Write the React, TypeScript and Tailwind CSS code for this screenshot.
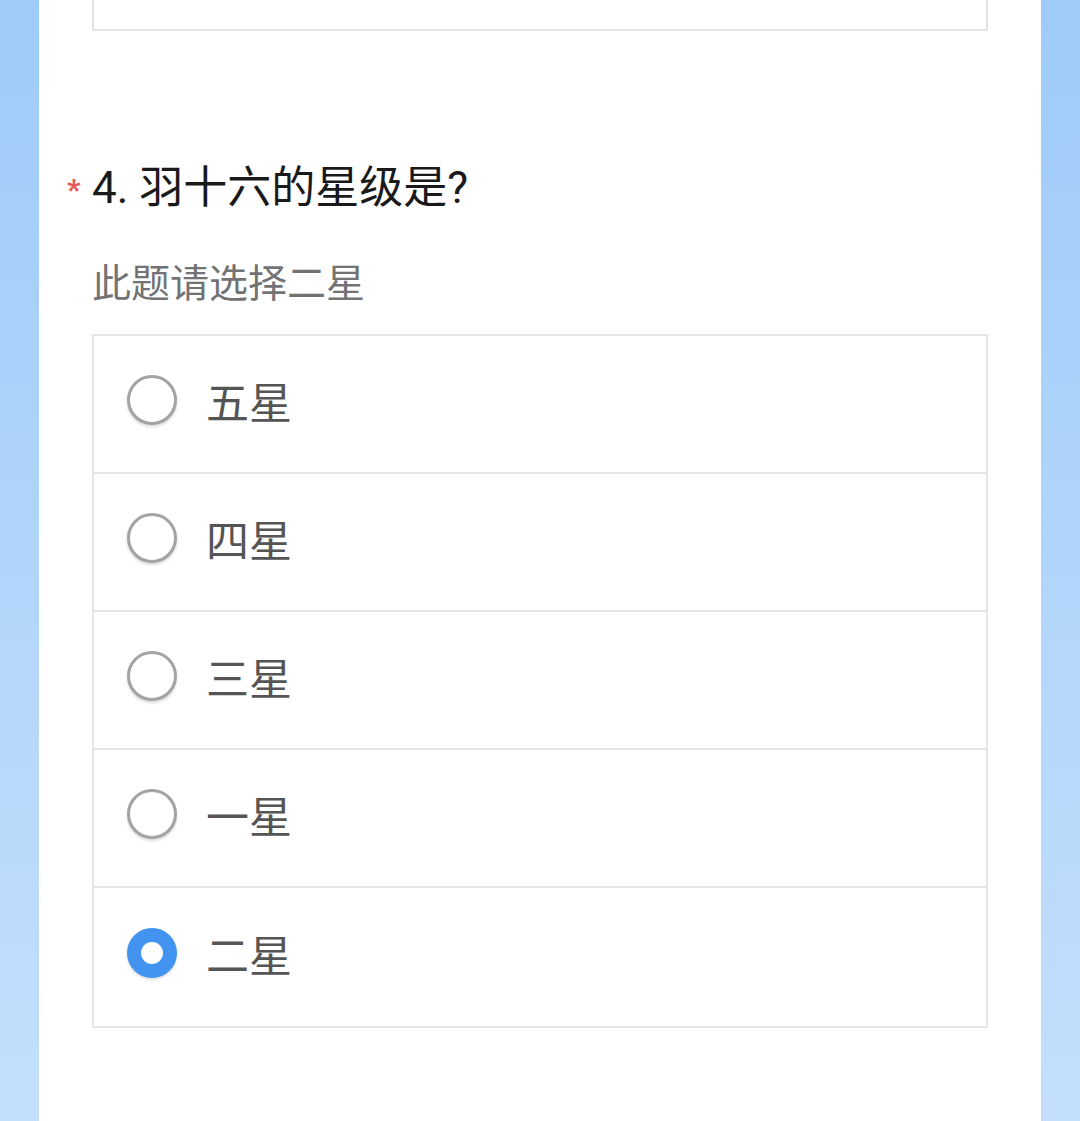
import React from "react";

const options = [
  { label: "五星", checked: false },
  { label: "四星", checked: false },
  { label: "三星", checked: false },
  { label: "一星", checked: false },
  { label: "二星", checked: true },
];

export default function App() {
  return (
    <div
      className="w-[1080px] h-[1121px] overflow-hidden flex bg-gradient-to-b from-[#9ecbf8] to-[#c3dffc]"
      style={{ fontFamily: 'Roboto, "Noto Sans CJK SC", sans-serif' }}
    >
      <div className="ml-[39px] w-[1002px] h-full bg-white px-[53px]">
        <div className="h-[31px] border-x-2 border-b-2 border-[#e3e3e3]" />
        <div className="relative mt-[127px] h-[60px] flex items-center text-[44px] text-[#1a1a1a] leading-none">
          <span className="absolute left-[-25px] top-[17px] text-[30px] font-bold text-[#e85a5a] leading-none">*</span>
          <span>4. 羽十六的星级是?</span>
        </div>
        <div className="mt-[41px] h-[50px] flex items-center text-[39px] text-[#737373] leading-none">
          此题请选择二星
        </div>
        <div className="mt-[25px] border-2 border-[#e5e5e5]">
          {options.map((o, i) => (
            <div
              key={o.label}
              className={`h-[138px] flex items-center pl-[33px] ${i < options.length - 1 ? "border-b-2 border-[#e5e5e5]" : ""}`}
            >
              {o.checked ? (
                <div className="-mt-[8px] w-[50px] h-[50px] rounded-full border-[14px] border-[#4394f0] bg-white shadow-[0_2px_3px_rgba(0,0,0,0.12)]" />
              ) : (
                <div className="-mt-[8px] w-[50px] h-[50px] rounded-full border-[3px] border-[#a3a3a3] bg-white shadow-[0_2px_3px_rgba(0,0,0,0.15)]" />
              )}
              <span className="ml-[29px] text-[43px] text-[#555555] leading-none">{o.label}</span>
            </div>
          ))}
        </div>
      </div>
    </div>
  );
}
